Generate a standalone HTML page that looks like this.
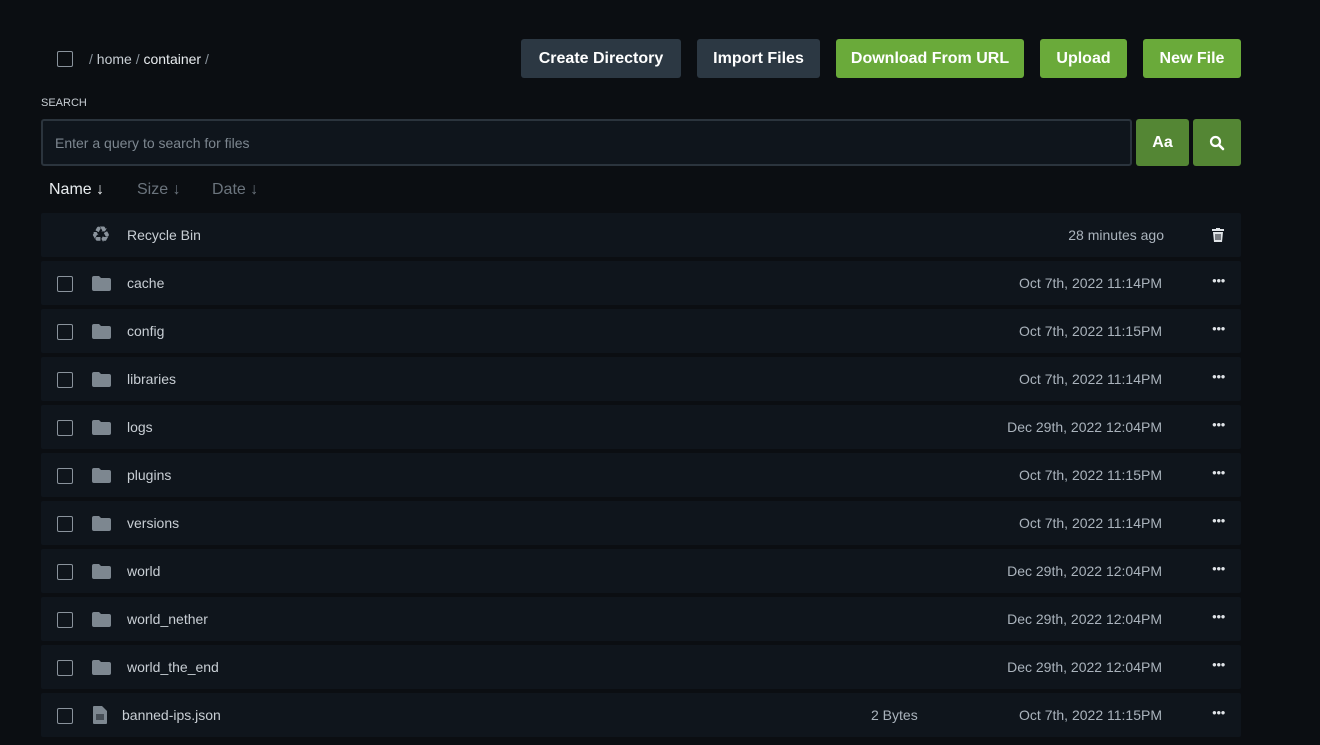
<!DOCTYPE html><html><head><style>
body{margin:0;background:#0b0e12;font-family:"Liberation Sans",sans-serif;width:1320px;height:745px;overflow:hidden;position:relative}
.a{position:absolute}
.cb{position:absolute;width:16px;height:16px;border:1.5px solid #8a939c;border-radius:2px;box-sizing:border-box}
.btn{position:absolute;top:39px;height:39px;border-radius:3px;color:#fff;font-weight:bold;font-size:16px;line-height:40px;text-align:center}
.g{background:#6aaa3a}.d{background:#2c3843}
.row{position:absolute;left:41px;width:1200px;height:44px;background:#0f151c;border-radius:2px}
.row .n{position:absolute;left:86px;top:14px;font-size:14px;color:#c8ced4}
.row .t{position:absolute;right:79px;top:14px;font-size:14px;color:#aab3bc}
.dots{position:absolute;right:16px;top:15px;color:#e0e4e8;font-size:8px;letter-spacing:-0.5px}
</style></head><body>
<div class="cb" style="left:57px;top:51px"></div>
<div class="a" style="left:89px;top:51px;font-size:14px;color:#8a939c">/ <span style="color:#c8ced4">home</span> / <span style="color:#e8ecef">container</span> /</div>
<div class="btn d" style="left:521px;width:160px">Create Directory</div>
<div class="btn d" style="left:697px;width:123px">Import Files</div>
<div class="btn g" style="left:836px;width:188px">Download From URL</div>
<div class="btn g" style="left:1040px;width:87px">Upload</div>
<div class="btn g" style="left:1143px;width:98px">New File</div>
<div class="a" style="left:41px;top:97px;font-size:11px;color:#c8ced4">SEARCH</div>
<div class="a" style="left:41px;top:119px;width:1091px;height:47px;box-sizing:border-box;border:2px solid #2b343d;border-radius:3px;background:#0f151c"><span class="a" style="left:12px;top:14px;font-size:14px;color:#7d8790">Enter a query to search for files</span></div>
<div class="a" style="left:1136px;top:119px;width:53px;height:47px;background:#548634;border-radius:3px;color:#fff;font-weight:bold;font-size:16px;text-align:center;line-height:48px">Aa</div>
<div class="a" style="left:1193px;top:119px;width:48px;height:47px;background:#548634;border-radius:3px"><svg class="a" style="left:16px;top:16px" width="16" height="16" viewBox="0 0 16 16"><circle cx="6.5" cy="6.5" r="4.5" stroke="#fff" stroke-width="2.2" fill="none"/><path d="M10 10l4 4" stroke="#fff" stroke-width="2.6" stroke-linecap="round"/></svg></div>
<div class="a" style="left:49px;top:181px;font-size:16px;color:#e8ecef">Name ↓</div>
<div class="a" style="left:137px;top:181px;font-size:16px;color:#6b747d">Size ↓</div>
<div class="a" style="left:212px;top:181px;font-size:16px;color:#6b747d">Date ↓</div>
<div class="row" style="top:213px"><span class="a" style="left:50px;top:9px;font-size:22px;color:#8a939c">♻</span><span class="n">Recycle Bin</span><span class="t" style="right:77px">28 minutes ago</span>
<svg class="a" style="left:1171px;top:15px" width="12" height="14" viewBox="0 0 12 14"><rect x="0" y="1" width="12" height="2" fill="#e0e4e8"/><rect x="4" y="0" width="4" height="2" fill="#e0e4e8"/><path d="M1 4h10l-1 10H2z" fill="#e0e4e8"/><path d="M4 6v6M6 6v6M8 6v6" stroke="#0f151c" stroke-width="1"/></svg></div>
<div id="rows"></div>
<script>
var r=[["cache","Oct 7th, 2022 11:14PM"],["config","Oct 7th, 2022 11:15PM"],["libraries","Oct 7th, 2022 11:14PM"],["logs","Dec 29th, 2022 12:04PM"],["plugins","Oct 7th, 2022 11:15PM"],["versions","Oct 7th, 2022 11:14PM"],["world","Dec 29th, 2022 12:04PM"],["world_nether","Dec 29th, 2022 12:04PM"],["world_the_end","Dec 29th, 2022 12:04PM"]];
var h="";r.forEach(function(x,i){h+='<div class="row" style="top:'+(261+48*i)+'px"><div class="cb" style="left:16px;top:15px"></div><svg class="a" style="left:51px;top:15px" width="19" height="15" viewBox="0 0 19 15"><path d="M0 2a2 2 0 0 1 2-2h5l2 2h8a2 2 0 0 1 2 2v9a2 2 0 0 1-2 2H2a2 2 0 0 1-2-2z" fill="#7d8790"/></svg><span class="n">'+x[0]+'</span><span class="t">'+x[1]+'</span><span class="dots">●●●</span></div>'});
h+='<div class="row" style="top:693px"><div class="cb" style="left:16px;top:15px"></div><svg class="a" style="left:52px;top:13px" width="14" height="18" viewBox="0 0 14 18"><path d="M0 1a1 1 0 0 1 1-1h8l5 5v12a1 1 0 0 1-1 1H1a1 1 0 0 1-1-1z" fill="#7d8790"/><path d="M3 9h8M3 11h8M3 13h8" stroke="#0f151c"/></svg><span class="n" style="left:81px">banned-ips.json</span><span class="a" style="left:830px;top:14px;font-size:14px;color:#aab3bc">2 Bytes</span><span class="t">Oct 7th, 2022 11:15PM</span><span class="dots">●●●</span></div>';
document.getElementById("rows").innerHTML=h;
</script>
</body></html>
